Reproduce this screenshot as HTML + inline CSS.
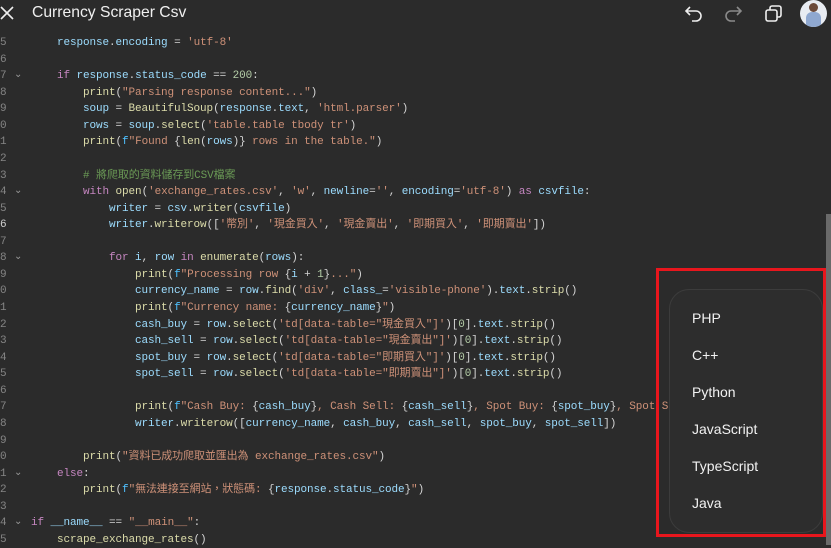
<!DOCTYPE html>
<html><head><meta charset="utf-8">
<style>
html,body{margin:0;padding:0;}
body{width:831px;height:545px;background:#2b2b2b;overflow:hidden;position:relative;font-family:"Liberation Sans","Noto Sans CJK TC",sans-serif;}
.title{position:absolute;left:32px;top:4px;font-size:15.7px;color:#f0f0f0;}
.code{position:absolute;left:0;top:35px;font-family:"Liberation Mono","Noto Sans CJK TC",monospace;font-size:11px;letter-spacing:-0.1px;line-height:16.57px;white-space:pre;color:#d4d4d4;}
.ln{display:inline-block;width:31px;color:#858585;position:relative;}
.ln.a{color:#d0d0d0}
.chev{position:absolute;left:14px;top:0;color:#9a9a9a;font-size:10px}
.k{color:#c586c0}.v{color:#9cdcfe}.s{color:#ce9178}.f{color:#dcdcaa}.c{color:#6a9955}.n{color:#b5cea8}.b{color:#4fc1ff}
.red{position:absolute;left:656px;top:268px;width:164px;height:263px;border:3px solid #e8161d;}
.pop{position:absolute;left:669px;top:289px;width:152px;height:242px;border:1px solid #3c3c3c;border-radius:20px;background:#2d2d2d;}
.it{position:absolute;left:692px;font-size:14px;color:#f2f2f2;}
.sb{position:absolute;left:826px;top:214px;width:5px;height:331px;background:#6a6a6a;}
</style></head><body>
<svg style="position:absolute;left:0;top:6px" width="14" height="14" viewBox="0 0 14 14"><path d="M1 1L13 13M13 1L1 13" stroke="#eee" stroke-width="1.6"/></svg>
<div class="title">Currency Scraper Csv</div>
<svg style="position:absolute;left:684px;top:4px" width="20" height="18" viewBox="0 0 20 18"><path d="M6 3L2 7L6 11M2 7H12A5 5 0 0 1 12 17H8" fill="none" stroke="#eee" stroke-width="1.6"/></svg>
<svg style="position:absolute;left:723px;top:4px" width="20" height="18" viewBox="0 0 20 18"><path d="M14 3L18 7L14 11M18 7H8A5 5 0 0 0 8 17H12" fill="none" stroke="#8a8a8a" stroke-width="1.6"/></svg>
<svg style="position:absolute;left:764px;top:4px" width="20" height="20" viewBox="0 0 20 20"><rect x="2" y="6" width="11" height="11" rx="2" fill="none" stroke="#eee" stroke-width="1.6"/><path d="M6 6V4A2 2 0 0 1 8 2H15A2 2 0 0 1 17 4V11A2 2 0 0 1 15 13H13" fill="none" stroke="#eee" stroke-width="1.6"/></svg>
<div style="position:absolute;left:800px;top:0;width:27px;height:27px;border-radius:50%;background:#e8ecf2;overflow:hidden"><div style="position:absolute;left:9px;top:3px;width:9px;height:9px;border-radius:50%;background:#6b4a3a"></div><div style="position:absolute;left:6px;top:12px;width:15px;height:16px;border-radius:6px 6px 0 0;background:#8fa8d0"></div></div>
<div class="code"><span class="ln">5</span>    <span class="v">response</span>.<span class="v">encoding</span> = <span class="s">'utf-8'</span>
<span class="ln">6</span>
<span class="ln">7<span class="chev">&#8964;</span></span>    <span class="k">if</span> <span class="v">response</span>.<span class="v">status_code</span> == <span class="n">200</span>:
<span class="ln">8</span>        <span class="f">print</span>(<span class="s">"Parsing response content..."</span>)
<span class="ln">9</span>        <span class="v">soup</span> = <span class="f">BeautifulSoup</span>(<span class="v">response</span>.<span class="v">text</span>, <span class="s">'html.parser'</span>)
<span class="ln">0</span>        <span class="v">rows</span> = <span class="v">soup</span>.<span class="f">select</span>(<span class="s">'table.table tbody tr'</span>)
<span class="ln">1</span>        <span class="f">print</span>(<span class="b">f</span><span class="s">"Found </span>{<span class="f">len</span>(<span class="v">rows</span>)}<span class="s"> rows in the table."</span>)
<span class="ln">2</span>
<span class="ln">3</span>        <span class="c"># 將爬取的資料儲存到CSV檔案</span>
<span class="ln">4<span class="chev">&#8964;</span></span>        <span class="k">with</span> <span class="f">open</span>(<span class="s">'exchange_rates.csv'</span>, <span class="s">'w'</span>, <span class="v">newline</span>=<span class="s">''</span>, <span class="v">encoding</span>=<span class="s">'utf-8'</span>) <span class="k">as</span> <span class="v">csvfile</span>:
<span class="ln">5</span>            <span class="v">writer</span> = <span class="v">csv</span>.<span class="f">writer</span>(<span class="v">csvfile</span>)
<span class="ln a">6</span>            <span class="v">writer</span>.<span class="f">writerow</span>([<span class="s">'幣別'</span>, <span class="s">'現金買入'</span>, <span class="s">'現金賣出'</span>, <span class="s">'即期買入'</span>, <span class="s">'即期賣出'</span>])
<span class="ln">7</span>
<span class="ln">8<span class="chev">&#8964;</span></span>            <span class="k">for</span> <span class="v">i</span>, <span class="v">row</span> <span class="k">in</span> <span class="f">enumerate</span>(<span class="v">rows</span>):
<span class="ln">9</span>                <span class="f">print</span>(<span class="b">f</span><span class="s">"Processing row </span>{<span class="v">i</span> + <span class="n">1</span>}<span class="s">..."</span>)
<span class="ln">0</span>                <span class="v">currency_name</span> = <span class="v">row</span>.<span class="f">find</span>(<span class="s">'div'</span>, <span class="v">class_</span>=<span class="s">'visible-phone'</span>).<span class="v">text</span>.<span class="f">strip</span>()
<span class="ln">1</span>                <span class="f">print</span>(<span class="b">f</span><span class="s">"Currency name: </span>{<span class="v">currency_name</span>}<span class="s">"</span>)
<span class="ln">2</span>                <span class="v">cash_buy</span> = <span class="v">row</span>.<span class="f">select</span>(<span class="s">'td[data-table="現金買入"]'</span>)[<span class="n">0</span>].<span class="v">text</span>.<span class="f">strip</span>()
<span class="ln">3</span>                <span class="v">cash_sell</span> = <span class="v">row</span>.<span class="f">select</span>(<span class="s">'td[data-table="現金賣出"]'</span>)[<span class="n">0</span>].<span class="v">text</span>.<span class="f">strip</span>()
<span class="ln">4</span>                <span class="v">spot_buy</span> = <span class="v">row</span>.<span class="f">select</span>(<span class="s">'td[data-table="即期買入"]'</span>)[<span class="n">0</span>].<span class="v">text</span>.<span class="f">strip</span>()
<span class="ln">5</span>                <span class="v">spot_sell</span> = <span class="v">row</span>.<span class="f">select</span>(<span class="s">'td[data-table="即期賣出"]'</span>)[<span class="n">0</span>].<span class="v">text</span>.<span class="f">strip</span>()
<span class="ln">6</span>
<span class="ln">7</span>                <span class="f">print</span>(<span class="b">f</span><span class="s">"Cash Buy: </span>{<span class="v">cash_buy</span>}<span class="s">, Cash Sell: </span>{<span class="v">cash_sell</span>}<span class="s">, Spot Buy: </span>{<span class="v">spot_buy</span>}<span class="s">, Spot Sell: </span>{<span class="v">spot_sell</span>}<span class="s">"</span>)
<span class="ln">8</span>                <span class="v">writer</span>.<span class="f">writerow</span>([<span class="v">currency_name</span>, <span class="v">cash_buy</span>, <span class="v">cash_sell</span>, <span class="v">spot_buy</span>, <span class="v">spot_sell</span>])
<span class="ln">9</span>
<span class="ln">0</span>        <span class="f">print</span>(<span class="s">"資料已成功爬取並匯出為 exchange_rates.csv"</span>)
<span class="ln">1<span class="chev">&#8964;</span></span>    <span class="k">else</span>:
<span class="ln">2</span>        <span class="f">print</span>(<span class="b">f</span><span class="s">"無法連接至網站，狀態碼: </span>{<span class="v">response</span>.<span class="v">status_code</span>}<span class="s">"</span>)
<span class="ln">3</span>
<span class="ln">4<span class="chev">&#8964;</span></span><span class="k">if</span> <span class="v">__name__</span> == <span class="s">"__main__"</span>:
<span class="ln">5</span>    <span class="f">scrape_exchange_rates</span>()</div>
<div class="sb"></div>
<div class="pop"></div>
<div class="red"></div>
<div class="it" style="top:310px">PHP</div>
<div class="it" style="top:347px">C++</div>
<div class="it" style="top:384px">Python</div>
<div class="it" style="top:421px">JavaScript</div>
<div class="it" style="top:458px">TypeScript</div>
<div class="it" style="top:495px">Java</div>
</body></html>
